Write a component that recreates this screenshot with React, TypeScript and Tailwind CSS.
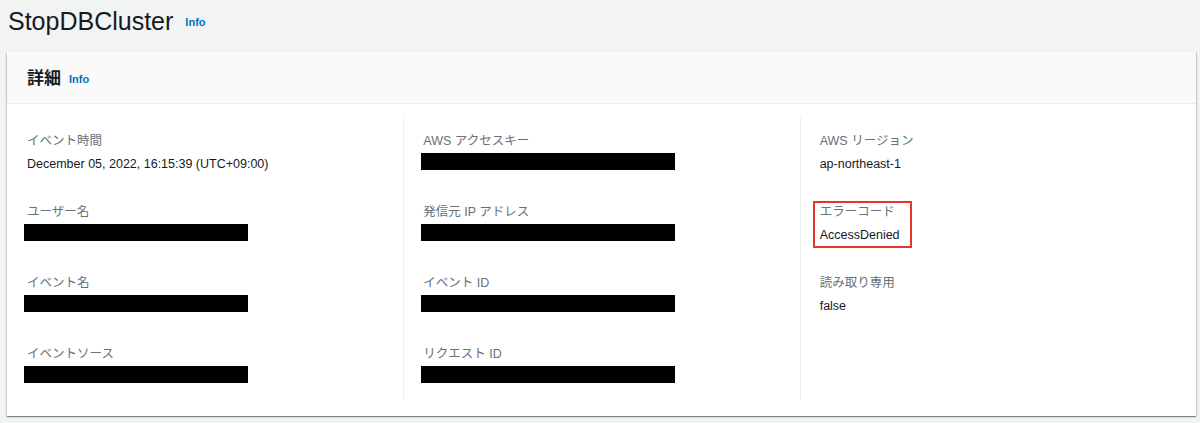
const font = "font-['Liberation_Sans','Noto_Sans_CJK_JP',sans-serif]";

type Item = { label: string; value?: string; masked?: boolean; boxed?: boolean };

const columns: Item[][] = [
  [
    { label: "イベント時間", value: "December 05, 2022, 16:15:39 (UTC+09:00)" },
    { label: "ユーザー名", masked: true },
    { label: "イベント名", masked: true },
    { label: "イベントソース", masked: true },
  ],
  [
    { label: "AWS アクセスキー", masked: true },
    { label: "発信元 IP アドレス", masked: true },
    { label: "イベント ID", masked: true },
    { label: "リクエスト ID", masked: true },
  ],
  [
    { label: "AWS リージョン", value: "ap-northeast-1" },
    { label: "エラーコード", value: "AccessDenied", boxed: true },
    { label: "読み取り専用", value: "false" },
  ],
];

function Field({ item, wide }: { item: Item; wide: boolean }) {
  return (
    <div className="relative">
      {item.boxed && (
        <div className="absolute -left-[7px] -top-[1px] w-[99px] h-[47px] border-2 border-[#e8342e]" />
      )}
      <div className="text-[12.5px] leading-[20px] text-[#687078]">{item.label}</div>
      <div className="mt-[2px] h-[22px]">
        {item.masked ? (
          <div
            className={`mt-[1px] h-[17px] bg-black ${
              wide ? "w-[254px] -ml-[2px]" : "w-[224px] -ml-[3px]"
            }`}
          />
        ) : (
          <div className="text-[12.5px] leading-[22px] text-[#16191f]">{item.value}</div>
        )}
      </div>
    </div>
  );
}

export default function App() {
  return (
    <div className={`w-[1200px] h-[423px] bg-[#f2f3f3] overflow-hidden ${font}`}>
      <div className="flex items-end h-[36px] pl-[8px] pt-[2px]">
        <h1 className="text-[25px] leading-[30px] text-[#16191f]">StopDBCluster</h1>
        <a className="ml-[12px] mb-[6px] text-[11px] font-bold text-[#0073bb]">Info</a>
      </div>

      <section className="mt-[16px] ml-[7px] w-[1189px] bg-white shadow-[0_1px_1px_0_rgba(0,28,36,0.3),1px_1px_1px_0_rgba(0,28,36,0.15),-1px_1px_1px_0_rgba(0,28,36,0.15)]">
        <div className="h-[52px] bg-[#fafafa] border-b border-[#eaeded] flex items-center pl-[20px] pt-[2px]">
          <h2 className="text-[17px] font-bold text-[#16191f]">詳細</h2>
          <a className="ml-[8px] mt-[2px] text-[11px] font-bold text-[#0073bb]">Info</a>
        </div>

        <div className="grid grid-cols-3 pt-[14px] pb-[17px]">
          {columns.map((col, i) => (
            <div key={i} className={i > 0 ? "border-l border-[#eaeded] pl-[19px]" : "pl-[20px]"}>
              <div className="flex flex-col gap-[27px] pt-[13px] pb-[11px]">
                {col.map((item) => (
                  <Field key={item.label} item={item} wide={i === 1} />
                ))}
              </div>
            </div>
          ))}
        </div>
      </section>
    </div>
  );
}
